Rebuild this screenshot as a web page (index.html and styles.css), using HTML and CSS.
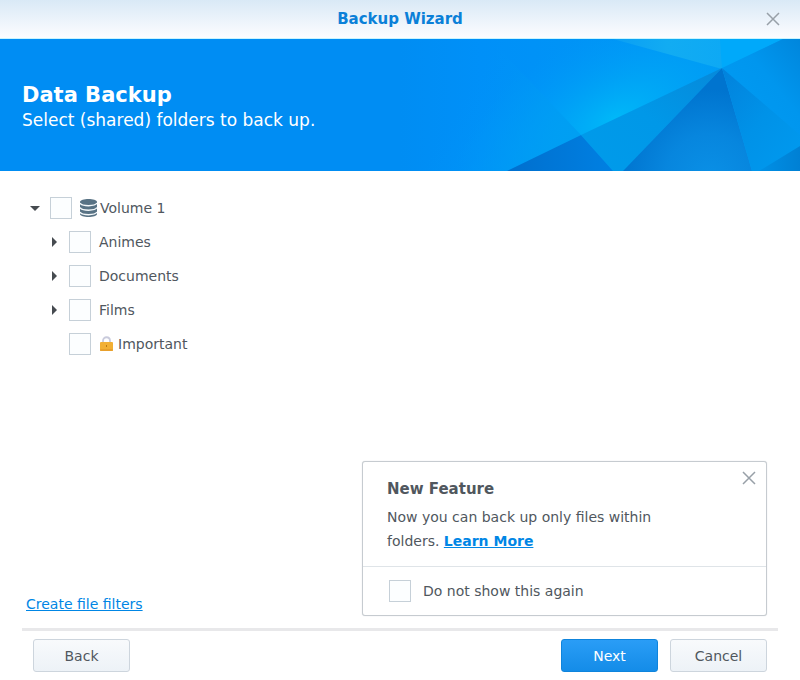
FILE: index.html
```
<!DOCTYPE html>
<html lang="en">
<head>
    <meta charset="UTF-8">
    <meta name="viewport" content="width=device-width, initial-scale=1.0">
    <title>Backup Wizard</title>
    <link rel="stylesheet" href="styles.css">
</head>
<body>
    <header class="titlebar">
        <h1>Backup Wizard</h1>
        <button type="button" class="close-btn" aria-label="Close">
            <svg width="14" height="14" viewBox="0 0 14 14"><path d="M1 1L13 13M13 1L1 13"/></svg>
        </button>
    </header>

    <section class="banner">
        <svg class="banner-art" viewBox="0 0 400 132" preserveAspectRatio="xMaxYMid slice" aria-hidden="true">
            <defs>
                <linearGradient id="base" x1="0" y1="0" x2="1" y2="0">
                    <stop offset="0" stop-color="#008df3"/>
                    <stop offset="0.2" stop-color="#0090f8"/>
                    <stop offset="1" stop-color="#009cf2"/>
                </linearGradient>
                <radialGradient id="glow" gradientUnits="userSpaceOnUse" cx="0" cy="0" r="1" gradientTransform="translate(215 80) rotate(-26) scale(170 90)">
                    <stop offset="0" stop-color="#00b8f8"/>
                    <stop offset="0.4" stop-color="#00a8f6" stop-opacity="0.7"/>
                    <stop offset="1" stop-color="#0098f8" stop-opacity="0"/>
                </radialGradient>
                <linearGradient id="left" gradientUnits="userSpaceOnUse" x1="60" y1="66" x2="160" y2="126">
                    <stop offset="0" stop-color="#0094f6" stop-opacity="0"/>
                    <stop offset="1" stop-color="#009ff2"/>
                </linearGradient>
                <linearGradient id="top" x1="0" y1="0" x2="1" y2="0">
                    <stop offset="0" stop-color="#0a9ef4"/>
                    <stop offset="0.5" stop-color="#12acf2"/>
                    <stop offset="1" stop-color="#0ea9f4"/>
                </linearGradient>
                <linearGradient id="mid" x1="0" y1="1" x2="1" y2="0">
                    <stop offset="0" stop-color="#009bea"/>
                    <stop offset="0.5" stop-color="#0098e8"/>
                    <stop offset="1" stop-color="#0689da"/>
                </linearGradient>
                <linearGradient id="dark" x1="0" y1="0" x2="1" y2="0">
                    <stop offset="0" stop-color="#006fce"/>
                    <stop offset="1" stop-color="#0080e2"/>
                </linearGradient>
                <radialGradient id="peak" gradientUnits="userSpaceOnUse" cx="310" cy="140" r="90">
                    <stop offset="0" stop-color="#0a90e6"/>
                    <stop offset="0.5" stop-color="#0786de"/>
                    <stop offset="1" stop-color="#0074cf"/>
                </radialGradient>
                <linearGradient id="right" x1="0" y1="0" x2="1" y2="1">
                    <stop offset="0" stop-color="#0282dc"/>
                    <stop offset="0.5" stop-color="#0092e8"/>
                    <stop offset="1" stop-color="#009aef"/>
                </linearGradient>
                <linearGradient id="corner" x1="0" y1="0" x2="1" y2="0">
                    <stop offset="0" stop-color="#0090e6"/>
                    <stop offset="1" stop-color="#0080d4"/>
                </linearGradient>
                <linearGradient id="edge" x1="0" y1="1" x2="1" y2="0">
                    <stop offset="0" stop-color="#009cf4"/>
                    <stop offset="0.6" stop-color="#0096ee"/>
                    <stop offset="1" stop-color="#0086dc"/>
                </linearGradient>
            </defs>
            <rect width="400" height="132" fill="url(#base)"/>
            <rect width="400" height="132" fill="url(#glow)"/>
            <path d="M0 0H90L181 96L107 132H0Z" fill="url(#left)"/>
            <path d="M213 0H322V30Z" fill="url(#top)"/>
            <path d="M320 0H383L322 30Z" fill="#00a9fa"/>
            <path d="M322 29L181 96L213 132H223Z" fill="url(#mid)"/>
            <path d="M181 96L107 132H213Z" fill="url(#dark)"/>
            <path d="M322 29L223 132H352Z" fill="url(#peak)"/>
            <path d="M322 29L383 0H400V98Z" fill="url(#edge)"/>
            <path d="M322 29L400 96V132H352Z" fill="url(#right)"/>
            <path d="M359 132L400 107V132Z" fill="url(#corner)"/>
        </svg>
        <div class="banner-text">
            <h2>Data Backup</h2>
            <p>Select (shared) folders to back up.</p>
        </div>
    </section>

    <main class="content">
        <ul class="tree">
            <li>
                <div class="row">
                    <button type="button" class="toggle" aria-label="Collapse Volume 1" aria-expanded="true">
                        <svg width="12" height="12" viewBox="0 0 12 12"><path d="M1 4H11L6 9Z"/></svg>
                    </button>
                    <input type="checkbox" id="volume1">
                    <label for="volume1">
                        <svg width="20" height="20" viewBox="0 0 20 20">
                            <path d="M0 4C0 0 17 0 17 4V16C17 20 0 20 0 16Z" fill="#587284"/>
                            <path d="M0 5C2 8.5 15 8.5 17 5M0 9.5C2 13 15 13 17 9.5M0 14C2 17.5 15 17.5 17 14" fill="none" stroke="#f4f8fa" stroke-width="1.5"/>
                        </svg>
                        Volume 1
                    </label>
                </div>
                <ul>
                    <li class="row">
                        <button type="button" class="toggle" aria-label="Expand Animes" aria-expanded="false">
                            <svg width="12" height="12" viewBox="0 0 12 12"><path d="M4 1V11L9 6Z"/></svg>
                        </button>
                        <input type="checkbox" id="animes">
                        <label for="animes">Animes</label>
                    </li>
                    <li class="row">
                        <button type="button" class="toggle" aria-label="Expand Documents" aria-expanded="false">
                            <svg width="12" height="12" viewBox="0 0 12 12"><path d="M4 1V11L9 6Z"/></svg>
                        </button>
                        <input type="checkbox" id="documents">
                        <label for="documents">Documents</label>
                    </li>
                    <li class="row">
                        <button type="button" class="toggle" aria-label="Expand Films" aria-expanded="false">
                            <svg width="12" height="12" viewBox="0 0 12 12"><path d="M4 1V11L9 6Z"/></svg>
                        </button>
                        <input type="checkbox" id="films">
                        <label for="films">Films</label>
                    </li>
                    <li class="row">
                        <span class="toggle"></span>
                        <input type="checkbox" id="important">
                        <label for="important">
                            <svg width="19" height="18" viewBox="0 0 19 18">
                                <path d="M4 8V6C4 1 11 1 11 6V8" fill="none" stroke="#c9cbdc" stroke-width="1.8"/>
                                <rect x="1" y="7" width="13" height="9" rx="1" fill="#f2b035"/>
                                <rect x="1" y="14" width="13" height="2" rx="1" fill="#e8a02c"/>
                                <rect x="7" y="10" width="1" height="2" fill="#b97914"/>
                            </svg>
                            Important
                        </label>
                    </li>
                </ul>
            </li>
        </ul>

        <a class="filters-link" href="#">Create file filters</a>

        <aside class="popup">
            <button type="button" class="close-btn" aria-label="Close notice">
                <svg width="14" height="14" viewBox="0 0 14 14"><path d="M1 1L13 13M13 1L1 13"/></svg>
            </button>
            <div class="popup-body">
                <h3>New Feature</h3>
                <p>Now you can back up only files within folders. <a href="#">Learn More</a></p>
            </div>
            <div class="popup-footer">
                <input type="checkbox" id="hide">
                <label for="hide">Do not show this again</label>
            </div>
        </aside>
    </main>

    <footer class="footer">
        <button type="button" class="button">Back</button>
        <div class="footer-right">
            <button type="button" class="button primary">Next</button>
            <button type="button" class="button">Cancel</button>
        </div>
    </footer>
</body>
</html>
```

FILE: styles.css
```
* {
    box-sizing: border-box;
}

body {
    display: flex;
    flex-direction: column;
    min-height: 100vh;
    margin: 0;
    background: #fff;
    color: #50575e;
    font-family: Verdana, "DejaVu Sans", sans-serif;
    font-size: 14px;
    line-height: 24px;
}

h1, h2, h3, p, ul {
    margin: 0;
    padding: 0;
}

ul {
    list-style: none;
}

a {
    color: #0086e5;
}

svg {
    display: block;
    flex: none;
}

input[type="checkbox"] {
    appearance: none;
    flex: none;
    width: 22px;
    height: 22px;
    margin: 0;
    border: 1px solid #c6d0d8;
    background: #fcfeff;
}

input[type="checkbox"]:checked {
    background: #0086e5;
}

/* Title bar */
.titlebar {
    position: relative;
    padding: 7px 40px;
    border-bottom: 1px solid #c8f4ff;
    background: linear-gradient(#d9e9f6, #fdfcff);
    text-align: center;
}

.titlebar h1 {
    color: #0b80d8;
    font-size: 15px;
    line-height: 24px;
}

.close-btn {
    position: absolute;
    top: 9px;
    right: 17px;
    padding: 3px;
    border: none;
    background: none;
    cursor: pointer;
}

.close-btn path {
    fill: none;
    stroke: #98a0a8;
    stroke-width: 1.5;
}

/* Banner */
.banner {
    position: relative;
    background: #008df3;
    color: #fff;
}

.banner-art {
    position: absolute;
    top: 0;
    right: 0;
    width: 400px;
    height: 100%;
}

.banner-text {
    position: relative;
    padding: 43px 22px 39px;
}

.banner h2 {
    font-size: 21px;
    line-height: 26px;
}

.banner p {
    font-size: 17px;
    line-height: 24px;
}

/* Folder tree */
.content {
    position: relative;
    display: flex;
    flex: 1;
    flex-direction: column;
    justify-content: space-between;
    align-items: flex-start;
    padding: 20px 26px 12px;
}

.row {
    display: flex;
    align-items: center;
    height: 34px;
}

.tree ul {
    padding-left: 19px;
}

.toggle {
    width: 18px;
    margin-right: 6px;
    padding: 3px;
    border: none;
    background: none;
    cursor: pointer;
}

.toggle path {
    fill: #464b50;
}

.row label {
    display: flex;
    align-items: center;
    padding-left: 8px;
}

/* Notice over the tree */
.popup {
    position: absolute;
    right: 33px;
    bottom: 12px;
    width: 405px;
    border: 1px solid #c6cbd0;
    border-radius: 3px;
    background: #fff;
    box-shadow: 0 0 1px #c6cbd0;
}

.popup .close-btn {
    top: 6px;
    right: 7px;
}

.popup-body {
    padding: 15px 72px 13px 24px;
}

.popup h3 {
    margin-bottom: 4px;
    font-size: 15px;
    line-height: 24px;
}

.popup a {
    font-weight: bold;
}

.popup-footer {
    display: flex;
    align-items: center;
    gap: 12px;
    padding: 12px 26px;
    border-top: 1px solid #dfe4e8;
}

/* Buttons */
.footer {
    display: flex;
    justify-content: space-between;
    margin: 0 22px;
    padding: 8px 11px;
    border-top: 3px solid #e8e8ea;
}

.footer-right {
    display: flex;
    gap: 12px;
}

.button {
    min-width: 97px;
    height: 33px;
    border: 1px solid #cdd5dd;
    border-radius: 3px;
    background: linear-gradient(#f8fafc, #edf2f7);
    color: #50575e;
    font-family: inherit;
    font-size: 14px;
    cursor: pointer;
}

.button.primary {
    border-color: #0f84dc;
    background: linear-gradient(#2a9df6, #148ce8);
    color: #fff;
}
```
